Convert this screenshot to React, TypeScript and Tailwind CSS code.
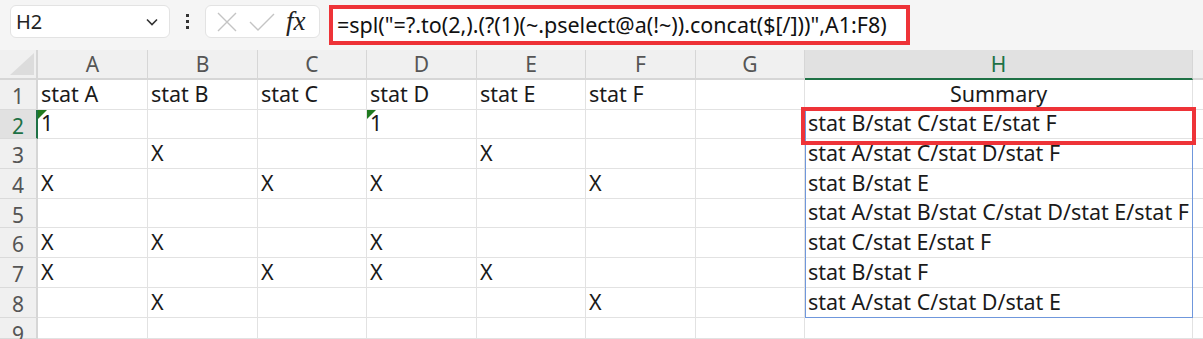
import React from 'react';

const cols = ['A', 'B', 'C', 'D', 'E', 'F', 'G', 'H'];
const widths = [110, 110, 109, 110, 109, 110, 109, 388];
const rowHeights = [30, 29, 30, 30, 29, 30, 30, 30, 21];

const data: string[][] = [
  ['stat A', 'stat B', 'stat C', 'stat D', 'stat E', 'stat F', '', 'Summary'],
  ['1', '', '', '1', '', '', '', 'stat B/stat C/stat E/stat F'],
  ['', 'X', '', '', 'X', '', '', 'stat A/stat C/stat D/stat F'],
  ['X', '', 'X', 'X', '', 'X', '', 'stat B/stat E'],
  ['', '', '', '', '', '', '', 'stat A/stat B/stat C/stat D/stat E/stat F'],
  ['X', 'X', '', 'X', '', '', '', 'stat C/stat E/stat F'],
  ['X', '', 'X', 'X', 'X', '', '', 'stat B/stat F'],
  ['', 'X', '', '', '', 'X', '', 'stat A/stat C/stat D/stat E'],
  ['', '', '', '', '', '', '', ''],
];

const font = { fontFamily: '"Noto Sans", "Noto Sans CJK SC", sans-serif' };

const TopBar: React.FC = () => (
  <div className="h-[50px] bg-[#f5f5f5] flex items-start pt-[5px] pl-[10px]">
    <div className="w-[160px] h-[33px] bg-white rounded-[6px] border border-[#e3e3e3] flex items-center justify-between pl-[5px] pr-[10px]">
      <span className="text-[20px] text-[#222]">H2</span>
      <svg width="14" height="10" viewBox="0 0 14 10" fill="none" stroke="#333" strokeWidth="1.6">
        <path d="M2 2.5 L7 7.5 L12 2.5" />
      </svg>
    </div>
    <div className="w-[35px] h-[33px] flex flex-col items-center justify-center gap-[3px]">
      <div className="w-[3px] h-[3px] bg-[#333]" />
      <div className="w-[3px] h-[3px] bg-[#333]" />
      <div className="w-[3px] h-[3px] bg-[#333]" />
    </div>
    <div className="w-[115px] h-[33px] bg-white rounded-[6px] border border-[#e3e3e3] flex items-center pl-[10px] gap-[11px]">
      <svg width="22" height="22" viewBox="0 0 22 22" stroke="#c4c4c4" strokeWidth="1.4">
        <path d="M2 2 L20 20 M20 2 L2 20" />
      </svg>
      <svg width="26" height="20" viewBox="0 0 26 20" fill="none" stroke="#c4c4c4" strokeWidth="1.4">
        <path d="M1 10 L9 18 L25 2" />
      </svg>
      <span className="text-[27px] leading-none italic text-[#222]" style={{ fontFamily: '"Liberation Serif", serif' }}>
        fx
      </span>
    </div>
    <div className="ml-[9px] w-[581px] h-[40px] bg-white border-[4px] border-[#ee3338] flex items-center pl-[4px]">
      <span className="text-[21.5px] text-[#111] whitespace-nowrap" style={font}>
        =spl(&quot;=?.to(2,).(?(1)(~.pselect@a(!~)).concat($[/]))&quot;,A1:F8)
      </span>
    </div>
  </div>
);

const HeaderRow: React.FC = () => (
  <div className="flex h-[30px] bg-[#f0f0f0]">
    <div className="w-[38px] shrink-0 relative border-r-2 border-b-2 border-[#d6d6d6]">
      <svg className="absolute right-[2px] bottom-[3px]" width="24" height="22" viewBox="0 0 24 22">
        <path d="M24 0 L24 22 L0 22 Z" fill="#dcdcdc" />
      </svg>
    </div>
    {cols.map((c, i) => (
      <div
        key={c}
        style={{ width: widths[i] }}
        className={
          c === 'H'
            ? 'shrink-0 flex items-center justify-center pt-[2px] text-[21px] text-[#1e7145] bg-[#e1e1e1] border-r border-[#d6d6d6] border-b-2 border-b-[#1e7145]'
            : 'shrink-0 flex items-center justify-center pt-[2px] text-[21px] text-[#555] border-r border-b-2 border-[#d6d6d6]'
        }
      >
        {c}
      </div>
    ))}
    <div className="flex-1 border-b-2 border-[#d6d6d6]" />
  </div>
);

const App: React.FC = () => (
  <div className="w-[1203px] h-[339px] overflow-hidden bg-white relative" style={font}>
    <TopBar />
    <HeaderRow />
    {data.map((row, r) => (
      <div key={r} className="flex" style={{ height: rowHeights[r] }}>
        <div
          className={
            r === 1
              ? 'w-[38px] shrink-0 bg-[#e1e1e1] border-r-2 border-r-[#1e7145] border-b border-[#dadada] flex items-start justify-center pt-[6px] text-[21px] leading-none text-[#1e7145]'
              : 'w-[38px] shrink-0 bg-[#f0f0f0] border-r-2 border-r-[#d6d6d6] border-b border-[#dadada] flex items-start justify-center pt-[6px] text-[21px] leading-none text-[#555]'
          }
        >
          {r + 1}
        </div>
        {row.map((v, c) => (
          <div
            key={c}
            style={{ width: widths[c] }}
            className={
              'shrink-0 relative border-r border-b border-[#e2e2e2] flex items-end text-[21.5px] leading-none text-[#1a1a1a] whitespace-nowrap ' +
              (r === 0 && c === 7 ? 'justify-center pb-[5px]' : 'pl-[3px] pb-[5px]')
            }
          >
            {r === 1 && (c === 0 || c === 3) && (
              <svg className="absolute left-0 top-0" width="9" height="9" viewBox="0 0 9 9">
                <path d="M0 0 L9 0 L0 9 Z" fill="#1f7a1f" />
              </svg>
            )}
            {v}
          </div>
        ))}
        <div className="flex-1 border-b border-[#e2e2e2]" />
      </div>
    ))}
    {/* spill range outline H2:H8 */}
    <div className="absolute left-[805px] top-[110px] w-[388px] h-[208px] border-[1.5px] border-[#6f97dc] pointer-events-none" />
    {/* red highlight on H2 */}
    <div className="absolute left-[801px] top-[107px] w-[395px] h-[38px] border-[4px] border-[#ee3338] pointer-events-none" />
  </div>
);

export default App;
